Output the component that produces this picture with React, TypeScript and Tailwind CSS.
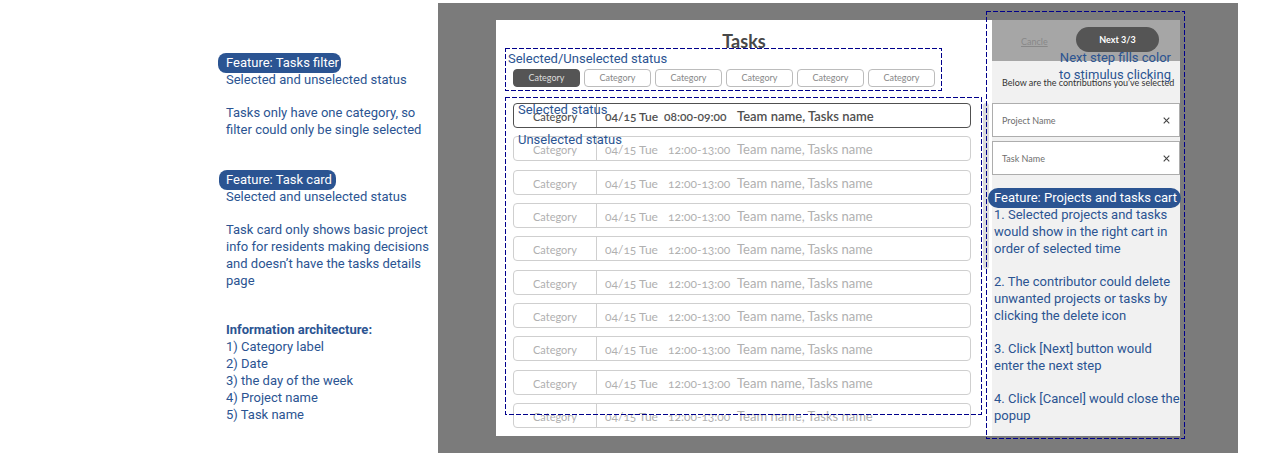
import type { ReactNode } from "react";

const categories = ["Category", "Category", "Category", "Category", "Category", "Category"];

const tasks = Array.from({ length: 10 }, (_, index) => ({
  id: index,
  category: "Category",
  date: "04/15 Tue",
  time: index === 0 ? "08:00-09:00" : "12:00-13:00",
  name: "Team name, Tasks name",
  selected: index === 0,
}));

function DashedFrame({ className }: { className: string }) {
  return (
    <div className={`pointer-events-none absolute ${className}`} aria-hidden="true">
      <svg className="block h-full w-full overflow-visible" shapeRendering="crispEdges">
        <rect width="100%" height="100%" fill="none" stroke="#00008b" strokeWidth="1" strokeDasharray="5 2" />
      </svg>
    </div>
  );
}

function Badge({ children, className }: { children: ReactNode; className: string }) {
  return (
    <h2 className={`h-5 w-fit whitespace-nowrap bg-[#2b5492] text-[13px] leading-[19px] text-white ${className}`}>
      {children}
    </h2>
  );
}

function Notes() {
  return (
    <aside className="flex flex-col pt-[50px] pl-[226px] text-[#2b5492]">
      <section>
        <Badge className="-ml-2 rounded-lg pr-0.5 pl-2">Feature: Tasks filter</Badge>
        <div className="-mt-0.5 flex w-[208px] flex-col gap-4">
          <p>Selected and unselected status</p>
          <p>Tasks only have one category, so filter could only be single selected</p>
        </div>
      </section>
      <section className="mt-8">
        <Badge className="-ml-[7px] rounded-lg pr-1 pl-[7px]">Feature: Task card</Badge>
        <div className="-mt-0.5 flex w-[208px] flex-col gap-4">
          <p>Selected and unselected status</p>
          <p>Task card only shows basic project info for residents making decisions and doesn’t have the tasks details page</p>
        </div>
      </section>
      <section className="mt-8">
        <h2 className="font-bold">Information architecture:</h2>
        <ul>
          <li>1) Category label</li>
          <li>2) Date</li>
          <li>3) the day of the week</li>
          <li>4) Project name</li>
          <li>5) Task name</li>
        </ul>
      </section>
    </aside>
  );
}

function TaskFilter() {
  return (
    <section className="relative mt-[18px] w-[422px]" aria-label="Tasks filter">
      <div className="grid grid-cols-6 gap-1">
        {categories.map((label, index) => (
          <button
            key={index}
            type="button"
            aria-pressed={index === 0}
            className={
              index === 0
                ? "h-[18px] rounded border border-[#555] bg-[#555] text-[9px] leading-4 text-[#ddd]"
                : "h-[18px] rounded border border-[#bcbcbc] bg-white text-[9px] leading-4 text-[#888]"
            }
          >
            {label}
          </button>
        ))}
      </div>
      <DashedFrame className="-top-[21px] -right-1.5 -bottom-[3px] -left-2" />
      <p className="absolute -top-[19px] -left-[5px] whitespace-nowrap font-[Roboto,sans-serif] text-[13px] leading-[17px] text-[#2b5492]">
        Selected/Unselected status
      </p>
    </section>
  );
}

function TaskList() {
  return (
    <section className="relative mt-4 flex flex-1 flex-col justify-between gap-1" aria-label="Task cards">
      {tasks.map((task) => (
        <button
          key={task.id}
          type="button"
          aria-pressed={task.selected}
          className={`grid h-[25px] grid-cols-[83px_63px_69px_1fr] items-center rounded border bg-white text-left text-[12px] ${
            task.selected ? "border-[#505050] font-semibold text-[#505050]" : "border-[#cfcfcf] text-[#b0b0b0]"
          }`}
        >
          <span
            className={`flex h-full items-center justify-center border-r pt-0.5 text-[11px] ${
              task.selected ? "border-[#909090] font-medium" : "border-[#cfcfcf]"
            }`}
          >
            {task.category}
          </span>
          <span className="pt-0.5 pl-2 whitespace-nowrap">{task.date}</span>
          <span className={task.selected ? "pt-0.5 pl-1 whitespace-nowrap" : "pt-0.5 pl-2 whitespace-nowrap"}>{task.time}</span>
          <span className="pt-0.5 pl-2 text-[13px] whitespace-nowrap">{task.name}</span>
        </button>
      ))}
      <DashedFrame className="-top-1.5 -right-2.5 bottom-3.5 -left-2" />
      <p className="absolute -top-0.5 left-[5px] font-[Roboto,sans-serif] text-[13px] leading-[17px] text-[#2b5492]">Selected status</p>
      <p className="absolute top-7 left-[5px] font-[Roboto,sans-serif] text-[13px] leading-[17px] text-[#2b5492]">Unselected status</p>
    </section>
  );
}

function CartItem({ name }: { name: string }) {
  return (
    <li className="flex h-[34px] items-center justify-between border border-[#adadad] bg-white px-[9px] text-[9px] text-[#6e6e6e]">
      <span>{name}</span>
      <button type="button" aria-label={`Delete ${name}`}>
        <svg viewBox="0 0 7 7" className="size-[7px]" fill="none" stroke="#444" strokeWidth="1.1">
          <path d="M0.7 0.7 6.3 6.3M6.3 0.7 0.7 6.3" />
        </svg>
      </button>
    </li>
  );
}

function Cart() {
  return (
    <aside className="relative flex w-[188px] shrink-0 flex-col bg-[#f1f1f1]">
      <header className="flex h-[41px] items-start justify-between bg-[#a6a6a6] pt-[7px] pr-[21px] pl-[29px]">
        <a href="#cancel" className="pt-2 text-[9px] leading-[13px] text-[#888] underline">Cancle</a>
        <button type="button" className="h-[25px] w-[83px] rounded-full bg-[#555] text-[9px] font-bold text-white">
          Next 3/3
        </button>
      </header>
      <p className="mt-[15px] px-2.5 text-[9px] leading-[13px] whitespace-nowrap text-[#333]">
        Below are the contributions you’ve selected
      </p>
      <ul className="mt-3.5 flex flex-col gap-1">
        <CartItem name="Project Name" />
        <CartItem name="Task Name" />
      </ul>
      <section className="mt-[13px] -mr-1 pl-0.5 font-[Roboto,sans-serif] text-[13px] leading-[17px] text-[#2b5492]">
        <Badge className="-ml-1.5 rounded-[10px] pr-1 pl-1.5">Feature: Projects and tasks cart</Badge>
        <div className="-mt-0.5 flex flex-col gap-4">
          <p>1. Selected projects and tasks would show in the right cart in order of selected time</p>
          <p>2. The contributor could delete unwanted projects or tasks by clicking the delete icon</p>
          <p>3. Click [Next] button would enter the next step</p>
          <p>4. Click [Cancel] would close the popup</p>
        </div>
      </section>
      <DashedFrame className="-top-[9px] -right-1 -bottom-0.5 -left-1.5" />
      <p className="absolute top-[29px] right-[9px] w-[120px] text-right font-[Roboto,sans-serif] text-[13px] leading-[17px] text-[#2b5492]">
        Next step fills color to stimulus clicking
      </p>
    </aside>
  );
}

export default function App() {
  return (
    <div className="grid min-h-screen grid-cols-[438fr_800fr_42fr] bg-white pt-[3px] pb-[5px] font-[Roboto,sans-serif] text-[13px] leading-[17px]">
      <Notes />
      <div className="flex bg-[#7b7b7b] px-[58px] py-[17px] font-[Lato,sans-serif]">
        <div className="flex flex-1 bg-white" role="dialog" aria-label="Tasks">
          <main className="relative flex flex-1 flex-col pt-[11px] pr-[21px] pb-2 pl-[17px] oldstyle-nums">
            <h1 className="-mr-1 text-center text-[18px] leading-5 font-bold text-[#484848]">Tasks</h1>
            <TaskFilter />
            <TaskList />
            <div className="absolute top-[83px] right-[3px] h-[166px] w-1.5 rounded-full bg-[#dcdcdc]" aria-hidden="true" />
          </main>
          <Cart />
        </div>
      </div>
    </div>
  );
}
